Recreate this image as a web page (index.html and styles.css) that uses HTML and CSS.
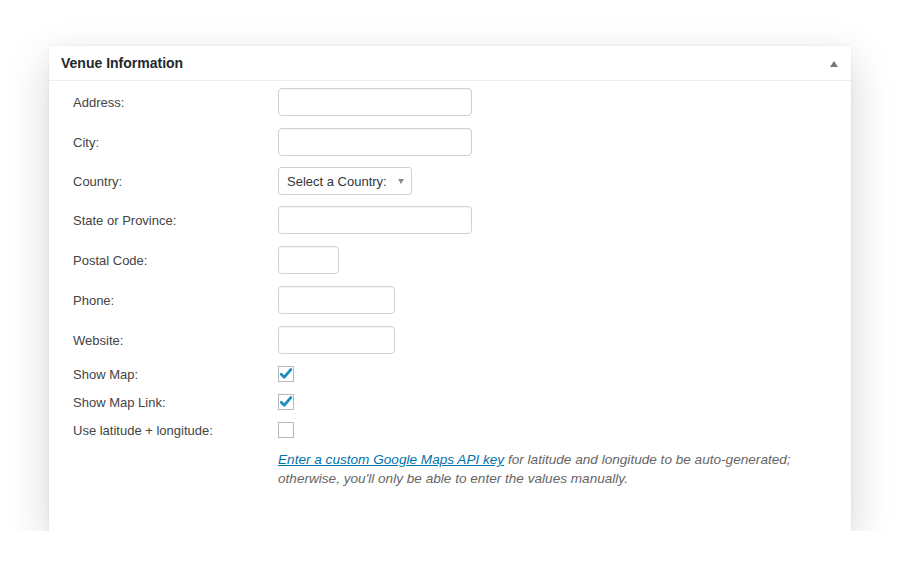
FILE: index.html
```html
<!DOCTYPE html>
<html lang="en">

<head>
  <meta charset="UTF-8">
  <meta name="viewport" content="width=device-width, initial-scale=1.0">
  <title>Venue Information</title>
  <link rel="stylesheet" href="styles.css">
</head>

<body>
  <div class="box">
    <div class="box__head">
      <h2 class="box__title">Venue Information</h2>
      <span class="box__toggle"></span>
    </div>
    <div class="box__body">
      <div class="row">
        <label class="row__label">Address:</label>
        <input class="field field--wide" type="text">
      </div>
      <div class="row">
        <label class="row__label">City:</label>
        <input class="field field--wide" type="text">
      </div>
      <div class="row row--tight">
        <label class="row__label">Country:</label>
        <div class="select">Select a Country:<span class="select__arrow"></span></div>
      </div>
      <div class="row row--tight">
        <label class="row__label">State or Province:</label>
        <input class="field field--wide" type="text">
      </div>
      <div class="row">
        <label class="row__label">Postal Code:</label>
        <input class="field field--short" type="text">
      </div>
      <div class="row">
        <label class="row__label">Phone:</label>
        <input class="field field--mid" type="text">
      </div>
      <div class="row">
        <label class="row__label">Website:</label>
        <input class="field field--mid" type="text">
      </div>
      <div class="row row--check">
        <label class="row__label">Show Map:</label>
        <span class="check">
          <svg width="14" height="14" viewBox="0 0 14 14"><path d="M2.2 7.2 L5.3 10.2 L11.8 2.6" fill="none" stroke="#1e8cbe" stroke-width="2.8" stroke-linecap="round" stroke-linejoin="round"/></svg>
        </span>
      </div>
      <div class="row row--check">
        <label class="row__label">Show Map Link:</label>
        <span class="check">
          <svg width="14" height="14" viewBox="0 0 14 14"><path d="M2.2 7.2 L5.3 10.2 L11.8 2.6" fill="none" stroke="#1e8cbe" stroke-width="2.8" stroke-linecap="round" stroke-linejoin="round"/></svg>
        </span>
      </div>
      <div class="row row--check">
        <label class="row__label">Use latitude + longitude:</label>
        <span class="check"></span>
      </div>
      <p class="note">
        <a href="#">Enter a custom Google Maps API key</a> for latitude and longitude to be auto-generated;<br>
        otherwise, you'll only be able to enter the values manually.
      </p>
    </div>
  </div>
</body>

</html>
```

FILE: styles.css
```css
body {
  margin: 0;
  background-color: #ffffff;
  font-family: 'Liberation Sans', Arial, sans-serif;
  color: #32373c;
}

.box {
  width: 802px;
  height: 485px;
  margin: 46px 0 0 49px;
  background-color: #ffffff;
  box-shadow: 0 14px 40px rgba(0, 0, 0, 0.17), 0 0 3px rgba(0, 0, 0, 0.07);
  box-sizing: border-box;
}

.box__head {
  display: flex;
  align-items: center;
  justify-content: space-between;
  height: 35px;
  padding: 0 13px 0 12px;
  border-bottom: 1px solid #eeeeee;
  box-sizing: border-box;
}

.box__title {
  margin: 0;
  font-size: 14px;
  font-weight: bold;
  color: #23282d;
}

.box__toggle {
  width: 0;
  height: 0;
  border-left: 4px solid transparent;
  border-right: 4px solid transparent;
  border-bottom: 6px solid #72777c;
  margin-top: 1px;
}

.box__body {
  display: flex;
  flex-direction: column;
  gap: 12px;
  padding: 7px 0 0 24px;
}

.row {
  display: flex;
  align-items: center;
  height: 28px;
}

.row--tight {
  margin-top: -1px;
}

.row--check {
  height: 16px;
}

.row__label {
  width: 205px;
  font-size: 13px;
  color: #444444;
}

.field {
  height: 28px;
  margin: 0;
  padding: 0 8px;
  border: 1px solid #d1d1d1;
  border-radius: 4px;
  box-shadow: inset 0 1px 1px rgba(0, 0, 0, 0.04);
  box-sizing: border-box;
  background-color: #ffffff;
}

.field--wide {
  width: 194px;
}

.field--mid {
  width: 117px;
}

.field--short {
  width: 61px;
}

.select {
  display: flex;
  align-items: center;
  justify-content: space-between;
  width: 134px;
  height: 28px;
  padding: 0 7px 0 8px;
  border: 1px solid #d1d1d1;
  border-radius: 3px;
  box-sizing: border-box;
  font-size: 13px;
  color: #32373c;
}

.select__arrow {
  width: 0;
  height: 0;
  border-left: 3px solid transparent;
  border-right: 3px solid transparent;
  border-top: 5px solid #8a8a8a;
}

.check {
  display: flex;
  align-items: center;
  justify-content: center;
  width: 16px;
  height: 16px;
  border: 1px solid #b4b9be;
  box-sizing: border-box;
  background-color: #ffffff;
}

.check svg {
  flex: none;
}

.note {
  margin: 0 0 0 205px;
  font-size: 13.6px;
  font-style: italic;
  line-height: 19px;
  color: #666666;
}

.note a {
  color: #0073aa;
}
```
